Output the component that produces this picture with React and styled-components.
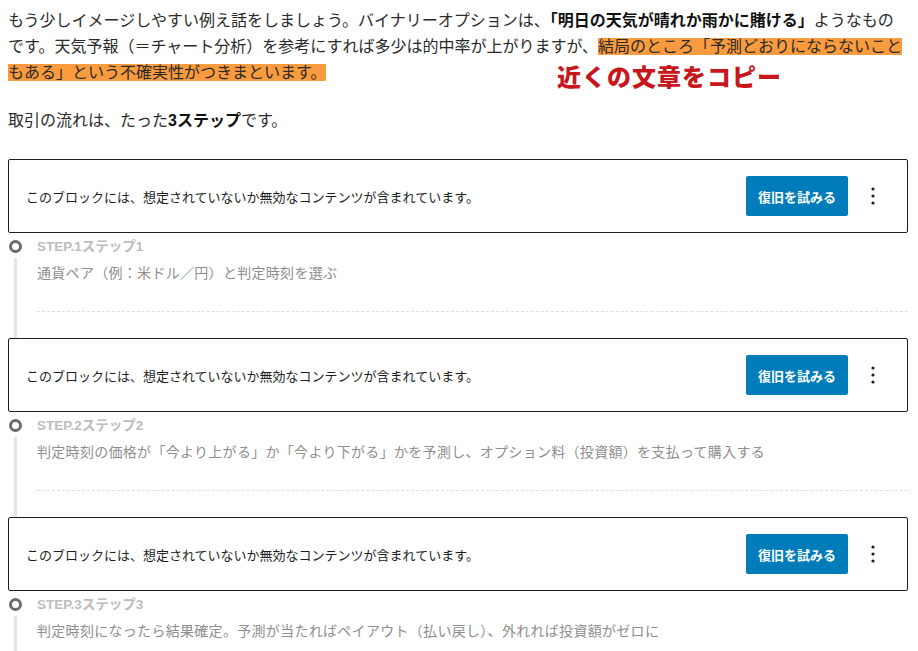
import styled, { createGlobalStyle } from "styled-components";

const GlobalStyle = createGlobalStyle`
  body {
    margin: 8px;
    background: #fff;
    font-family: "Liberation Sans", "Noto Sans CJK JP", sans-serif;
    color: #222;
  }
`;

const Page = styled.div`
  position: relative;
  width: 900px;
`;

const Paragraph = styled.p`
  margin: 0 0 22px;
  font-size: 16px;
  line-height: 26px;
  color: #2a2a2a;
`;

const Strong = styled.strong`
  font-weight: 700;
  color: #111;
`;

const Marker = styled.span`
  background-color: #f99b3e;
`;

const Note = styled.div`
  position: absolute;
  left: 549px;
  top: 50px;
  font-size: 24px;
  font-weight: 900;
  letter-spacing: 1px;
  color: #c8171c;
`;

const Spacer = styled.div`
  height: 3px;
`;

const InvalidBlock = styled.div`
  display: flex;
  align-items: center;
  padding: 16px 22px 16px 17px;
  border: 1px solid #1e1e1e;
  border-radius: 2px;
`;

const InvalidText = styled.div`
  flex: 1;
  font-size: 13px;
  color: #1e1e1e;
`;

const RecoverButton = styled.button`
  height: 40px;
  width: 102px;
  padding: 0 12px;
  border: none;
  border-radius: 2px;
  background: #007cba;
  color: #fff;
  font-family: inherit;
  font-size: 13px;
  font-weight: 700;
`;

const MoreButton = styled.button`
  display: flex;
  align-items: center;
  justify-content: center;
  width: 24px;
  height: 24px;
  margin-left: 13px;
  padding: 0;
  border: none;
  background: none;
  color: #1e1e1e;
`;

const Step = styled.div`
  position: relative;
  padding: 4px 0 26px 29px;

  &::before {
    content: "";
    position: absolute;
    left: 6px;
    top: 25px;
    bottom: 0;
    width: 3px;
    background: #e4e4e4;
  }

  &::after {
    content: "";
    position: absolute;
    left: 1px;
    top: 7px;
    width: 7px;
    height: 7px;
    border: 3px solid #6b6b6b;
    border-radius: 50%;
  }
`;

const StepLabel = styled.div`
  font-size: 13.5px;
  line-height: 20px;
  font-weight: 700;
  color: #bdbdbd;
`;

const StepText = styled.div`
  margin-top: 4px;
  font-size: 14px;
  line-height: 24px;
  letter-spacing: 0.3px;
  color: #8e8e8e;
`;

const Divider = styled.div`
  margin-top: 26px;
  border-top: 1px dashed #e0e0e0;
`;

const Kebab = () => (
  <svg width="4" height="18" viewBox="0 0 4 18">
    <circle cx="2" cy="2" r="1.6" fill="currentColor" />
    <circle cx="2" cy="9" r="1.6" fill="currentColor" />
    <circle cx="2" cy="16" r="1.6" fill="currentColor" />
  </svg>
);

const Invalid = () => (
  <InvalidBlock>
    <InvalidText>このブロックには、想定されていないか無効なコンテンツが含まれています。</InvalidText>
    <RecoverButton>復旧を試みる</RecoverButton>
    <MoreButton><Kebab /></MoreButton>
  </InvalidBlock>
);

const steps = [
  { label: "STEP.1ステップ1", text: "通貨ペア（例：米ドル／円）と判定時刻を選ぶ" },
  { label: "STEP.2ステップ2", text: "判定時刻の価格が「今より上がる」か「今より下がる」かを予測し、オプション料（投資額）を支払って購入する" },
  { label: "STEP.3ステップ3", text: "判定時刻になったら結果確定。予測が当たればペイアウト（払い戻し）、外れれば投資額がゼロに", last: true },
];

export default function App() {
  return (
    <>
      <GlobalStyle />
      <Page>
        <Paragraph>
          もう少しイメージしやすい例え話をしましょう。バイナリーオプションは、<Strong>「明日の天気が晴れか雨かに賭ける」</Strong>ようなものです。天気予報（＝チャート分析）を参考にすれば多少は的中率が上がりますが、<Marker>結局のところ「予測どおりにならないこともある」という不確実性がつきまといます。</Marker>
        </Paragraph>
        <Note>近くの文章をコピー</Note>
        <Paragraph>
          取引の流れは、たった<Strong>3ステップ</Strong>です。
        </Paragraph>
        <Spacer />
        {steps.map((s) => (
          <div key={s.label}>
            <Invalid />
            <Step>
              <StepLabel>{s.label}</StepLabel>
              <StepText>{s.text}</StepText>
              {!s.last && <Divider />}
            </Step>
          </div>
        ))}
      </Page>
    </>
  );
}
